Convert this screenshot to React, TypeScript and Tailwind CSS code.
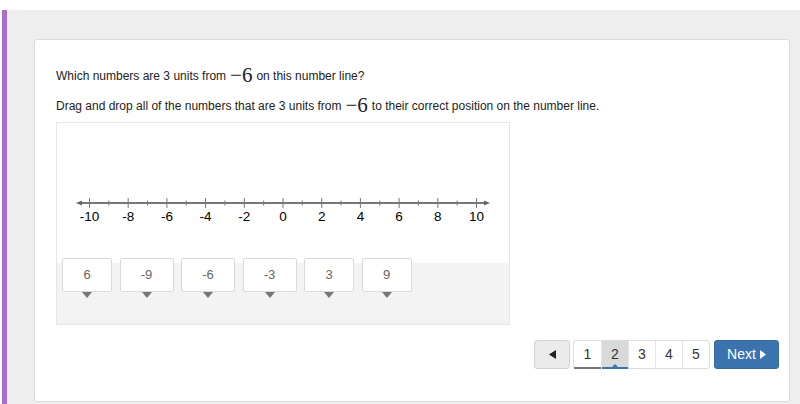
import React from 'react';

const TILES = [
  { label: '6', w: 'w-[50px]' },
  { label: '-9', w: 'w-[54px]' },
  { label: '-6', w: 'w-[54px]' },
  { label: '-3', w: 'w-[54px]' },
  { label: '3', w: 'w-[50px]' },
  { label: '9', w: 'w-[50px]' },
];

function MathNum({ children }: { children: React.ReactNode }) {
  return (
    <span className="mx-[4px] text-[21px] leading-none text-[#222]" style={{ fontFamily: '"Liberation Serif", "DejaVu Serif", serif' }}>
      {children}
    </span>
  );
}

function NumberLine() {
  const x0 = 32.5;
  const unit = 19.35;
  const y = 80;
  const ticks = Array.from({ length: 21 }, (_, i) => i - 10);
  return (
    <svg width="452" height="140" className="block">
      <line x1="22" y1={y} x2="430" y2={y} stroke="#777" strokeWidth="2" />
      <polygon points={`19,${y} 25,${y - 2.5} 25,${y + 2.5}`} fill="#666" />
      <polygon points={`433,${y} 427,${y - 2.5} 427,${y + 2.5}`} fill="#666" />
      {ticks.map(n => {
        const x = x0 + (n + 10) * unit;
        const major = n % 2 === 0;
        return (
          <g key={n}>
            <line x1={x} x2={x} y1={major ? y - 5 : y - 2.5} y2={major ? y + 5 : y + 2.5} stroke="#777" strokeWidth="1" />
            {major && (
              <text x={x} y={y + 17.5} textAnchor="middle" fontSize="13.5" fill="#000" fontFamily='"Liberation Sans", Arial, sans-serif'>
                {n}
              </text>
            )}
          </g>
        );
      })}
    </svg>
  );
}

function Pagination() {
  return (
    <div className="flex items-center justify-end pr-[10px] mt-[15px]">
      <button className="w-[36px] h-[29px] bg-[#ebebeb] border border-[#d4d4d4] rounded-[3px] flex items-center justify-center">
        <svg width="7" height="9" viewBox="0 0 7 9"><polygon points="0,4.5 7,0 7,9" fill="#222" /></svg>
      </button>
      <div className="ml-[3px] flex h-[29px] border border-[#ddd] rounded-[3px] bg-white">
        {[1, 2, 3, 4, 5].map(p => (
          <div
            key={p}
            className={`relative w-[27px] flex items-center justify-center text-[14px] text-[#333] ${p > 1 ? 'border-l border-[#e4e4e4]' : ''} ${p === 2 ? 'bg-[#d9d9d9]' : ''}`}
          >
            {p}
            {p === 1 && <div className="absolute left-0 right-0 -bottom-px h-[2px] bg-[#777]" />}
            {p === 2 && (
              <>
                <div className="absolute left-0 right-0 -bottom-px h-[2px] bg-[#3d74b0]" />
                <div className="absolute left-1/2 -translate-x-1/2 bottom-px w-0 h-0 border-l-[3px] border-r-[3px] border-b-[3px] border-l-transparent border-r-transparent border-b-[#3d74b0]" />
              </>
            )}
          </div>
        ))}
      </div>
      <button className="ml-[4px] w-[65px] h-[29px] bg-[#3a73ae] border border-[#3569a0] rounded-[3px] text-white text-[14px] flex items-center justify-center gap-[4px]">
        Next
        <svg width="6" height="9" viewBox="0 0 6 9"><polygon points="0,0 6,4.5 0,9" fill="#fff" /></svg>
      </button>
    </div>
  );
}

export default function App() {
  return (
    <div className="w-[800px] h-[404px] overflow-hidden bg-white pt-[10px] flex" style={{ fontFamily: '"Liberation Sans", Arial, Helvetica, sans-serif' }}>
      <div className="ml-[2px] w-[5px] bg-[#a86ec8] shrink-0" />
      <div className="flex-1 bg-[#eeeeee] pl-[27px] pt-[29px] pr-[10px] pb-[2px] flex">
        <div className="flex-1 bg-white border border-[#dcdcdc] rounded-[3px] pl-[21px] pt-[24px]">
          <p className="text-[12px] text-[#222] h-[23px] flex items-center">
            Which numbers are 3 units from<MathNum>−6</MathNum>on this number line?
          </p>
          <p className="mt-[7px] text-[12px] text-[#222] h-[23px] flex items-center">
            Drag and drop all of the numbers that are 3 units from<MathNum>−6</MathNum>to their correct position on the number line.
          </p>
          <div className="mt-[5px] w-[454px] h-[203px] border border-[#e6e6e6] flex flex-col">
            <div className="h-[140px] bg-white">
              <NumberLine />
            </div>
            <div className="flex-1 bg-[#f3f3f3] pl-[5px]">
              <div className="-mt-[5px] flex gap-[7.5px]">
                {TILES.map(t => (
                  <div key={t.label} className="flex flex-col items-center">
                    <div className={`${t.w} h-[34px] bg-white border border-[#dadada] rounded-[2px] flex items-center justify-center text-[13px] text-[#666]`}>
                      {t.label}
                    </div>
                    <div className="w-0 h-0 border-l-[5px] border-r-[5px] border-t-[6px] border-l-transparent border-r-transparent border-t-[#777]" />
                  </div>
                ))}
              </div>
            </div>
          </div>
          <Pagination />
        </div>
      </div>
    </div>
  );
}
